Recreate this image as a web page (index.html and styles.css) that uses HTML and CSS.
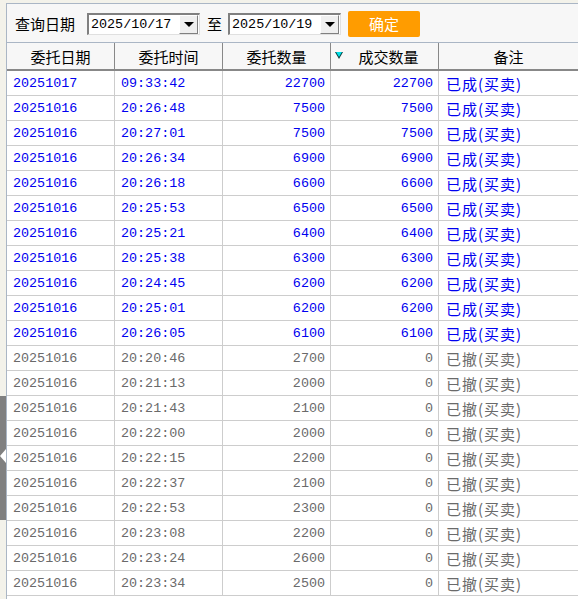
FILE: index.html
```html
<!DOCTYPE html>
<html>
<head>
<meta charset="utf-8">
<link rel="stylesheet" href="styles.css">
</head>
<body>
<div class="panel">
  <div class="toolbar">
    <span class="label">查询日期</span>
    <div class="select"><span class="val">2025/10/17</span><span class="drop"><i class="arrow"></i></span></div>
    <span class="to">至</span>
    <div class="select"><span class="val">2025/10/19</span><span class="drop"><i class="arrow"></i></span></div>
    <button class="ok">确定</button>
  </div>
  <div class="row head">
    <div class="c">委托日期</div>
    <div class="c">委托时间</div>
    <div class="c">委托数量</div>
    <div class="c sorted"><i class="sort"></i>成交数量</div>
    <div class="c">备注</div>
  </div>
  <div id="body"></div>
</div>
<div class="sidetab"><i class="tabarrow"></i></div>
<script src="app.js"></script>
</body>
</html>
```
FILE: app.js
```js
const done = [
 ["20251017","09:33:42","22700","22700"],
 ["20251016","20:26:48","7500","7500"],
 ["20251016","20:27:01","7500","7500"],
 ["20251016","20:26:34","6900","6900"],
 ["20251016","20:26:18","6600","6600"],
 ["20251016","20:25:53","6500","6500"],
 ["20251016","20:25:21","6400","6400"],
 ["20251016","20:25:38","6300","6300"],
 ["20251016","20:24:45","6200","6200"],
 ["20251016","20:25:01","6200","6200"],
 ["20251016","20:26:05","6100","6100"]
];
const cancel = [
 ["20251016","20:20:46","2700","0"],
 ["20251016","20:21:13","2000","0"],
 ["20251016","20:21:43","2100","0"],
 ["20251016","20:22:00","2000","0"],
 ["20251016","20:22:15","2200","0"],
 ["20251016","20:22:37","2100","0"],
 ["20251016","20:22:53","2300","0"],
 ["20251016","20:23:08","2200","0"],
 ["20251016","20:23:24","2600","0"],
 ["20251016","20:23:34","2500","0"]
];
const body = document.getElementById("body");
function add(r, cls, note){
  const row = document.createElement("div");
  row.className = "row " + cls;
  row.innerHTML =
    '<div class="c num l">'+r[0]+'</div>'+
    '<div class="c num l">'+r[1]+'</div>'+
    '<div class="c num r">'+r[2]+'</div>'+
    '<div class="c num r">'+r[3]+'</div>'+
    '<div class="c note">'+note+'</div>';
  body.appendChild(row);
}
done.forEach(r => add(r, "blue", "已成(买卖)"));
cancel.forEach(r => add(r, "grey", "已撤(买卖)"));
```
FILE: styles.css
```css
html, body {
  margin: 0;
  padding: 0;
  background: #f3f2ea;
  height: 599px;
  overflow: hidden;
}
body {
  font-family: "Noto Sans CJK SC", sans-serif;
}
.panel {
  margin: 3px 0 0 6px;
  border-top: 1px solid #aab6c5;
  border-left: 1px solid #aab6c5;
  background: #fff;
  height: 600px;
}
.toolbar {
  height: 38px;
  background: #f7f7f7;
  border-bottom: 1px solid #aab6c5;
  display: flex;
  align-items: center;
  padding-left: 8px;
}
.label {
  font-size: 15px;
  color: #000;
  margin-right: 12px;
  line-height: 1;
}
.select {
  width: 110px;
  height: 19px;
  border-top: 2px solid #808080;
  border-left: 2px solid #808080;
  border-right: 1px solid #e0e0e0;
  border-bottom: 1px solid #e0e0e0;
  background: #fff;
  display: flex;
  align-items: center;
  justify-content: space-between;
  margin-top: 2px;
}
.val {
  font-family: "Liberation Mono", monospace;
  font-size: 13.4px;
  color: #000;
  padding-left: 2px;
}
.drop {
  width: 17px;
  height: 17px;
  background: #efefef;
  border-top: 1px solid #fff;
  border-left: 1px solid #fff;
  border-right: 1px solid #808080;
  border-bottom: 1px solid #808080;
  display: flex;
  align-items: center;
  justify-content: center;
  margin-right: 1px;
}
.arrow {
  width: 0;
  height: 0;
  border-left: 5px solid transparent;
  border-right: 5px solid transparent;
  border-top: 5px solid #000;
}
.to {
  font-size: 15px;
  margin: 0 6px 0 7px;
  line-height: 1;
}
.ok {
  margin-left: 7px;
  width: 72px;
  height: 26px;
  margin-top: 1px;
  border: none;
  border-radius: 2px;
  background: #ff9c00;
  color: #fff;
  font-family: "Noto Sans CJK SC", sans-serif;
  font-size: 15px;
  padding: 0;
}
.row {
  display: grid;
  grid-template-columns: 108px 108px 108px 108px 1fr;
  height: 24px;
  border-bottom: 1px solid #cdcdcd;
}
.row .c {
  border-right: 1px solid #cdcdcd;
  display: flex;
  align-items: center;
  white-space: nowrap;
  overflow: hidden;
}
.row .c:last-child {
  border-right: none;
}
.head {
  height: 26px;
  background: #f7f7f7;
  border-bottom: 2px solid #888;
}
.head .c {
  justify-content: center;
  font-size: 15px;
  color: #000;
  border-right: 1px solid #888;
  position: relative;
}
.head .sorted {
  padding-left: 8px;
}
.sort {
  position: absolute;
  left: 4px;
  top: 9px;
  width: 0;
  height: 0;
  border-left: 4px solid transparent;
  border-right: 4px solid transparent;
  border-top: 7px solid #0b3a3a;
}
.sort::after {
  content: "";
  position: absolute;
  left: -3px;
  top: -7px;
  border-left: 3px solid transparent;
  border-right: 3px solid transparent;
  border-top: 5px solid #00e0e8;
}
.num {
  font-family: "Liberation Mono", monospace;
  font-size: 13.4px;
}
.l {
  padding-left: 6px;
}
.r {
  justify-content: flex-end;
  padding-right: 5px;
}
.note {
  font-size: 15px;
  padding-left: 7px;
  letter-spacing: 1px;
}
.blue .c {
  color: #0000f0;
}
.grey .c {
  color: #6a6a6a;
}
.sidetab {
  position: absolute;
  left: 0;
  top: 396px;
  width: 6px;
  height: 124px;
  background: #808080;
}
.tabarrow {
  position: absolute;
  left: 0;
  top: 53px;
  width: 0;
  height: 0;
  border-top: 7px solid transparent;
  border-bottom: 7px solid transparent;
  border-right: 6px solid #fff;
}
```
